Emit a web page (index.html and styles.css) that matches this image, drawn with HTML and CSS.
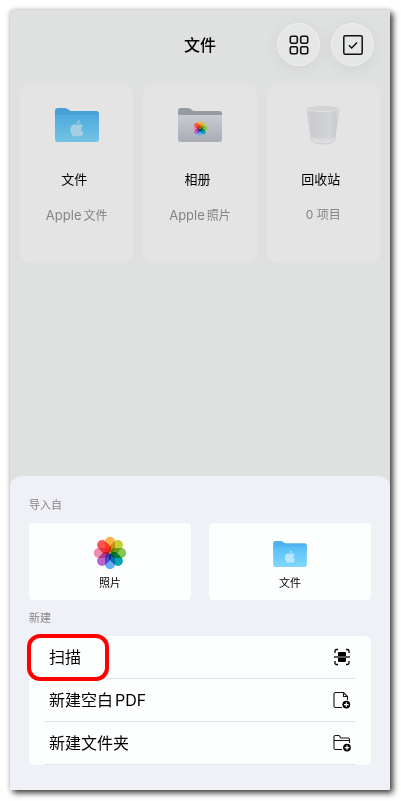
FILE: index.html
```html
<!DOCTYPE html>
<html lang="zh-CN">
<head>
    <meta charset="UTF-8">
    <meta name="viewport" content="width=device-width, initial-scale=1.0">
    <title>文件</title>
    <link rel="stylesheet" href="styles.css">
</head>
<body>
    <!-- Shared icon shapes -->
    <svg class="icon-defs" width="0" height="0" aria-hidden="true">
        <defs>
            <linearGradient id="blueFolder" x1="0" y1="0" x2="0" y2="1">
                <stop offset="0" stop-color="#56bdf8"/>
                <stop offset="1" stop-color="#80d8fc"/>
            </linearGradient>
            <linearGradient id="greyFolder" x1="0" y1="0" x2="0" y2="1">
                <stop offset="0" stop-color="#c8cbd0"/>
                <stop offset="1" stop-color="#a8adb5"/>
            </linearGradient>
            <linearGradient id="binBody" x1="0" y1="0" x2="1" y2="0">
                <stop offset="0" stop-color="#d6d7d9"/>
                <stop offset="0.15" stop-color="#c9cbce"/>
                <stop offset="0.7" stop-color="#d3d4d6"/>
                <stop offset="0.88" stop-color="#c8cacc"/>
                <stop offset="1" stop-color="#dcdddd"/>
            </linearGradient>
            <rect id="petal" x="12" y="0.800" width="10" height="15.700" rx="5"/>
            <symbol id="flower" viewBox="0 0 34 34">
                <g class="petals">
                    <use href="#petal" fill="#fdb14a"/>
                    <use href="#petal" fill="#c5ce32" transform="rotate(45 17 17)"/>
                    <use href="#petal" fill="#86c552" transform="rotate(90 17 17)"/>
                    <use href="#petal" fill="#05a6af" transform="rotate(135 17 17)"/>
                    <use href="#petal" fill="#66adf7" transform="rotate(180 17 17)"/>
                    <use href="#petal" fill="#b565cb" transform="rotate(225 17 17)"/>
                    <use href="#petal" fill="#f28bb2" transform="rotate(270 17 17)"/>
                    <use href="#petal" fill="#fc5552" transform="rotate(315 17 17)"/>
                </g>
            </symbol>
            <symbol id="apple" viewBox="0 0 14 17">
                <path d="M9.800 0C10 2.200 8.500 4 6.900 4C6.700 2 8.200 .5 9.800 0ZM7.100 5C8 5 8.800 4.300 10 4.300C11.400 4.300 12.500 5 13.100 6C10.400 7.500 10.900 11.200 13.600 12.300C13 14 11.700 16.600 10.100 16.600C9 16.600 8.500 15.900 7.200 15.900C5.900 15.900 5.400 16.600 4.300 16.600C2.500 16.600 .3 13 .3 9.600C.3 6.200 2.400 4.400 4.400 4.400C5.600 4.400 6.400 5 7.100 5Z"/>
            </symbol>
            <symbol id="folder" viewBox="0 0 44 34">
                <path fill="#4fb2ee" d="M0 3Q0 0 3 0H10Q12 0 13.500 1.500T17 3H41Q44 3 44 6V12H0Z"/>
                <path fill="url(#blueFolder)" d="M0 7H44V31Q44 34 41 34H3Q0 34 0 31Z"/>
                <use href="#apple" x="15" y="12" width="14" height="17" fill="#b9e6fb"/>
            </symbol>
        </defs>
    </svg>

    <div class="app">
        <header class="toolbar">
            <h1>文件</h1>
            <div class="toolbar-actions">
                <button type="button" class="round-button" aria-label="视图">
                    <svg width="20" height="20" viewBox="0 0 20 20" fill="none" stroke="#111" stroke-width="1.600">
                        <rect x="1.300" y="1.300" width="7" height="7" rx="1.500"/>
                        <rect x="11.700" y="1.300" width="7" height="7" rx="1.500"/>
                        <rect x="1.300" y="11.700" width="7" height="7" rx="1.500"/>
                        <rect x="11.700" y="11.700" width="7" height="7" rx="1.500"/>
                    </svg>
                </button>
                <button type="button" class="round-button" aria-label="选择">
                    <svg width="20" height="20" viewBox="0 0 20 20" fill="none" stroke="#111" stroke-width="1.500">
                        <rect x="0.800" y="0.800" width="18.400" height="18.400" rx="1.500"/>
                        <path d="M6 10.300L8.700 13L14 7.500"/>
                    </svg>
                </button>
            </div>
        </header>

        <main class="places">
            <a class="place" href="#">
                <svg class="place-icon dimmed" width="44" height="34"><use href="#folder"/></svg>
                <span class="place-name">文件</span>
                <span class="place-info"><span class="latin">Apple</span>文件</span>
            </a>
            <a class="place" href="#">
                <svg class="place-icon" width="44" height="34" viewBox="0 0 44 34">
                    <path fill="#969ba2" d="M0 3Q0 0 3 0H10Q12 0 13.500 1.500T17 3H41Q44 3 44 6V12H0Z"/>
                    <path fill="url(#greyFolder)" d="M0 7H44V31Q44 34 41 34H3Q0 34 0 31Z"/>
                    <use href="#flower" x="14.500" y="13" width="15" height="15"/>
                </svg>
                <span class="place-name">相册</span>
                <span class="place-info"><span class="latin">Apple</span>照片</span>
            </a>
            <a class="place" href="#">
                <svg class="place-icon bin" width="34" height="40" viewBox="0 0 34 40">
                    <path fill="url(#binBody)" stroke="#c6c8ca" stroke-width=".7" d="M1 3L5 34Q6 39 17 39T29 34L33 3Z"/>
                    <path fill="#dfe0e1" opacity=".7" d="M5 32Q17 35 29 32L28.500 34.500Q27 38 17 38T5.500 34.500Z"/>
                    <ellipse cx="17" cy="3.500" rx="16" ry="3" fill="#d2d3d5" stroke="#e6e7e7" stroke-width=".7"/>
                    <path fill="none" stroke="#e2e3e4" d="M7 36Q17 39.500 27 36"/>
                </svg>
                <span class="place-name">回收站</span>
                <span class="place-info">0 项目</span>
            </a>
        </main>

        <!-- Bottom sheet -->
        <section class="sheet">
            <h2>导入自</h2>
            <div class="import-options">
                <button type="button" class="import-button">
                    <svg width="34" height="34"><use href="#flower"/></svg>
                    <span>照片</span>
                </button>
                <button type="button" class="import-button">
                    <svg width="34" height="34" viewBox="0 0 34 34"><use href="#folder" x="0" y="5" width="34" height="26"/></svg>
                    <span>文件</span>
                </button>
            </div>

            <h2>新建</h2>
            <ul class="create-list">
                <li>
                    <button type="button" class="create-button">
                        <span>扫描</span>
                        <svg width="18" height="18" viewBox="0 0 18 18" fill="none" stroke="#000" stroke-width="1.300">
                            <path d="M2 5V3Q2 1.500 3.500 1.500H5M13 1.500H14.500Q16 1.500 16 3V5M16 13V15Q16 16.500 14.500 16.500H13M5 16.500H3.500Q2 16.500 2 15V13"/>
                            <path fill="#000" stroke="none" d="M5 8V5Q5 4 6 4H12Q13 4 13 5V8ZM5 10H13V13Q13 14 12 14H6Q5 14 5 13Z"/>
                            <path d="M1 9H17"/>
                        </svg>
                    </button>
                    <span class="highlight"></span>
                </li>
                <li>
                    <button type="button" class="create-button">
                        <span>新建空白<span class="latin-after">PDF</span></span>
                        <svg width="18" height="18" viewBox="0 0 18 18" fill="none" stroke="#111" stroke-width="1.100">
                            <path d="M9 16.500H2.500Q1 16.500 1 15V3Q1 1.500 2.500 1.500H10.500L14.500 5.500V9M10.500 1.500V5.500H14.500"/>
                            <circle cx="13.300" cy="13.600" r="3.900" fill="#000" stroke="none"/>
                            <path stroke="#fff" d="M13.300 11.300V15.900M11 13.600H15.600"/>
                        </svg>
                    </button>
                </li>
                <li>
                    <button type="button" class="create-button">
                        <span>新建文件夹</span>
                        <svg width="18" height="18" viewBox="0 0 18 18" fill="none" stroke="#111" stroke-width="1.100">
                            <path d="M9 15.500H2.500Q1 15.500 1 14V3Q1 1.500 2.500 1.500H6L8 4H15Q16.500 4 16.500 5.500V9M1 6.500H16.500"/>
                            <circle cx="14" cy="13.600" r="3.900" fill="#000" stroke="none"/>
                            <path stroke="#fff" d="M14 11.300V15.900M11.700 13.600H16.300"/>
                        </svg>
                    </button>
                </li>
            </ul>
        </section>
    </div>
</body>
</html>
```
FILE: styles.css
```css
* {
    box-sizing: border-box;
}

body {
    font-family: Inter, "Noto Sans CJK SC", sans-serif;
    background-color: #fff;
    color: #000;
    margin: 0;
    padding: 10px 11px 11px 10px;
}

h1, h2, ul {
    margin: 0;
    padding: 0;
    font-weight: 400;
}

button {
    font-family: inherit;
    color: inherit;
    border: none;
    padding: 0;
    cursor: pointer;
}

svg {
    display: block;
    flex-shrink: 0;
}

.icon-defs {
    position: absolute;
}

.petals {
    isolation: isolate;
}

.petals use {
    mix-blend-mode: multiply;
}

.app {
    display: flex;
    flex-direction: column;
    min-height: calc(100vh - 21px);
    background-color: #dfe1e0;
    box-shadow: 3px 3px 6px rgba(0, 0, 0, 0.75), 0 0 5px rgba(0, 0, 0, 0.15);
}

/* Top bar */
.toolbar {
    display: grid;
    grid-template-columns: 1fr auto 1fr;
    align-items: center;
    padding: 13px 16px 19px;
}

.toolbar h1 {
    grid-column: 2;
    font-size: 16px;
    font-weight: 500;
    line-height: 24px;
}

.toolbar-actions {
    display: flex;
    justify-content: flex-end;
    gap: 11px;
}

.round-button {
    display: flex;
    align-items: center;
    justify-content: center;
    width: 43px;
    height: 43px;
    border: 1px solid #f0f1f0;
    border-radius: 50%;
    background-color: #e5e7e6;
    box-shadow: 0 3px 18px rgba(0, 0, 0, 0.06);
}

/* Location cards */
.places {
    display: grid;
    grid-template-columns: repeat(3, 1fr);
    gap: 10px;
    padding: 0 10px;
}

.place {
    display: flex;
    flex-direction: column;
    align-items: center;
    padding: 20px 4px 37px;
    border-radius: 10px;
    background-color: #e4e4e4;
    color: #000;
    text-decoration: none;
}

.place-icon {
    height: 40px;
}

.dimmed {
    filter: brightness(0.9);
}

.place-name {
    margin-top: 24px;
    padding-right: 5px;
    font-size: 13px;
    line-height: 20px;
}

.place-info {
    margin-top: 16px;
    font-size: 12px;
    line-height: 20px;
    color: #858585;
}

.latin {
    margin-right: 2px;
    font-size: 13px;
}

.latin-after {
    margin-left: 2px;
}

/* Bottom sheet */
.sheet {
    margin-top: auto;
    padding: 19px 19px 25px;
    border-radius: 12px 12px 0 0;
    background-color: #f0f1f6;
}

.sheet h2 {
    font-size: 11px;
    line-height: 20px;
    color: #858589;
}

.import-options {
    display: grid;
    grid-template-columns: 1fr 1fr;
    gap: 18px;
    margin: 8px 0;
}

.import-button {
    display: flex;
    flex-direction: column;
    align-items: center;
    padding: 13px 0 8px;
    gap: 5px;
    border-radius: 4px;
    background-color: #fdfefe;
    font-size: 11px;
    line-height: 17px;
}

.create-list {
    margin-top: 8px;
    border-radius: 6px;
    background-color: #fdfefe;
    list-style-type: none;
}

.create-list li {
    position: relative;
    padding: 0 15px;
}

.create-button {
    display: flex;
    align-items: center;
    justify-content: space-between;
    width: 100%;
    height: 43px;
    padding: 0 5px;
    border-bottom: 1px solid #e4e5e7;
    background: none;
    font-size: 16px;
    line-height: 24px;
}

/* Red marker round the scan entry */
.highlight {
    position: absolute;
    top: -2px;
    left: -2px;
    width: 82px;
    height: 47px;
    border: 4px solid #fe0000;
    border-radius: 13px;
    pointer-events: none;
}
```
